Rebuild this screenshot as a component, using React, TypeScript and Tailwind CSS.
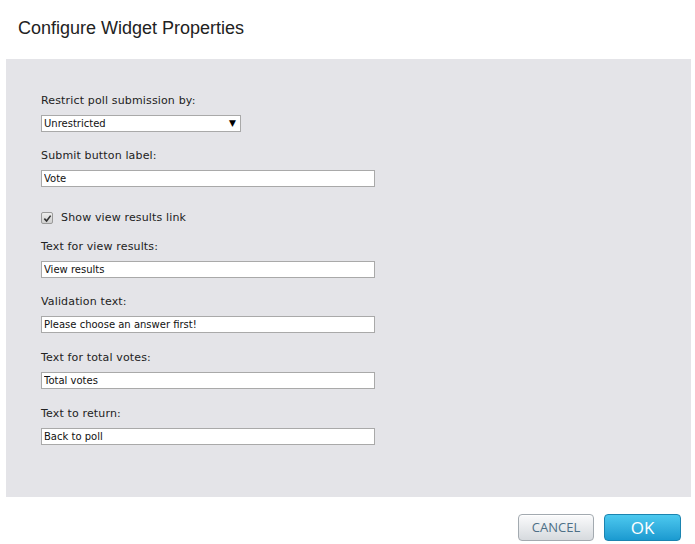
import React from 'react';

const labelCls = "block text-[11px] leading-[14px] text-[#222] mb-[7px] font-['DejaVu_Sans',Verdana,sans-serif] tracking-[0.15px]";
const inputCls = "block h-[17px] border border-[#a9a9a9] bg-white px-[2px] text-[10px] text-[#111] font-['DejaVu_Sans',Verdana,sans-serif] outline-none";

const Field: React.FC<{ label: string; value: string; gap?: string }> = ({ label, value, gap = 'mb-[18px]' }) => (
  <div className={gap}>
    <label className={labelCls}>{label}</label>
    <input className={`${inputCls} w-[334px]`} defaultValue={value} readOnly />
  </div>
);

const App: React.FC = () => {
  return (
    <div className="w-[695px] h-[544px] bg-white font-['Liberation_Sans',Arial,sans-serif] overflow-hidden">
      <h1 className="pl-[18px] pt-[17px] h-[59px] text-[18px] leading-[22px] text-[#222]">
        Configure Widget Properties
      </h1>

      <div className="mx-[6px] w-[685px] h-[438px] bg-[#e4e4e8] pl-[35px] pt-[35px]">
        <div className="mb-[17px]">
          <label className={labelCls}>Restrict poll submission by:</label>
          <div className={`${inputCls} w-[200px] flex items-center justify-between pr-[4px]`}>
            <span>Unrestricted</span>
            <span className="text-[9px] text-black">▼</span>
          </div>
        </div>

        <Field label="Submit button label:" value="Vote" gap="" />

        <div className="mt-[24px] mb-[15px] flex items-center h-[14px]">
          <span className="w-[12px] h-[12px] border border-[#9a9a9a] rounded-[2px] bg-gradient-to-b from-[#eeeeee] to-[#cfcfcf] flex items-center justify-center">
            <svg width="9" height="9" viewBox="0 0 10 10">
              <path d="M1.5 5.2 L4 7.8 L8.5 1.8" fill="none" stroke="#333" strokeWidth="1.8" />
            </svg>
          </span>
          <span className="ml-[8px] text-[11px] leading-[14px] text-[#222] font-['DejaVu_Sans',Verdana,sans-serif] tracking-[0.15px]">
            Show view results link
          </span>
        </div>

        <Field label="Text for view results:" value="View results" gap="mb-[17px]" />
        <Field label="Validation text:" value="Please choose an answer first!" />
        <Field label="Text for total votes:" value="Total votes" />
        <Field label="Text to return:" value="Back to poll" gap="" />
      </div>

      <div className="flex justify-end gap-[10px] pr-[14px] pt-[17px]">
        <button className="w-[76px] h-[27px] rounded-[4px] border border-[#a3aab0] bg-gradient-to-b from-[#fbfbfc] to-[#d6dade] text-[13px] text-[#4d6f86] font-['Open_Sans',sans-serif] shadow-[inset_0_1px_0_#fff]">
          CANCEL
        </button>
        <button className="w-[77px] h-[27px] rounded-[4px] border border-[#1b84b0] bg-gradient-to-b from-[#4cc9ef] to-[#1a9ad0] text-[17px] text-white font-['Open_Sans',sans-serif]">
          OK
        </button>
      </div>
    </div>
  );
};

export default App;
